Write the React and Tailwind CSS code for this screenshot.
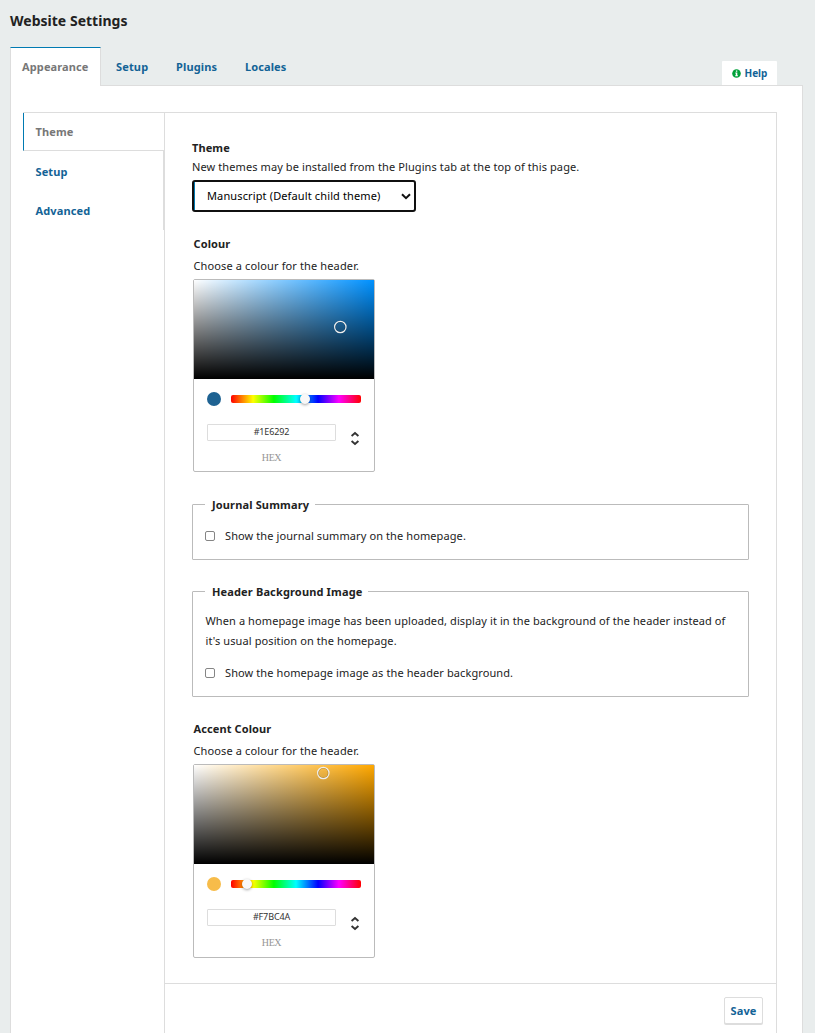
import React from "react";

const HUE = "bg-[linear-gradient(to_right,#f00_0%,#ff0_17%,#0f0_33%,#0ff_50%,#00f_67%,#f0f_83%,#f00_100%)]";

function ColourPicker({ hue, hex, pointer, handle, className }) {
  return (
    <div className={"flex w-[182px] flex-col rounded-[2px] border border-[#bbb] bg-white " + className}>
      <div className="relative h-[99px] overflow-hidden" style={{ backgroundColor: hue }}>
        <div className="absolute inset-0 bg-[linear-gradient(to_right,#fff,rgba(255,255,255,0))]" />
        <div className="absolute inset-0 bg-[linear-gradient(to_top,#000,rgba(0,0,0,0))]" />
        <svg className="absolute h-[14px] w-[14px]" style={{ left: pointer[0], top: pointer[1] }} viewBox="0 0 14 14">
          <circle cx="7.3" cy="7" r="5" fill="none" stroke="#000" strokeOpacity="0.25" strokeWidth="1" />
          <circle cx="7.3" cy="7" r="5.7" fill="none" stroke="#eee" strokeWidth="1.2" />
        </svg>
      </div>
      <div className="flex h-[39px] items-center pl-[13px]">
        <div className="h-[14px] w-[14px] rounded-full" style={{ backgroundColor: hex }} />
        <div className={"relative ml-[10px] h-2 w-[130px] rounded-[2px] " + HUE}>
          <div
            className="absolute -top-px h-[10px] w-[10px] rounded-full bg-[#f8f8f8] shadow-[0_1px_3px_rgba(0,0,0,0.37)]"
            style={{ left: handle }}
          />
        </div>
      </div>
      <div className="flex pl-[13px] pt-[6px]">
        <div className="w-[129px]">
          <div className="h-[17px] rounded-[1px] border border-[#ddd] text-center text-[9px] leading-[14px] tracking-[-0.12px] text-[#333]">
            {hex}
          </div>
          <div className="mt-[10px] text-center font-['Liberation_Serif',serif] text-[10px] leading-[14px] tracking-[-0.4px] text-[#969696]">
            HEX
          </div>
        </div>
        <svg className="ml-[14px] mt-[6px] h-[17px] w-[10px]" viewBox="0 0 10 17" fill="none" stroke="#333" strokeWidth="1.9">
          <path d="M1.6 6 5 3.1 8.4 6M1.6 11 5 13.9 8.4 11" />
        </svg>
      </div>
    </div>
  );
}

function Check({ children }) {
  return (
    <label className="flex h-5 items-center">
      <input type="checkbox" className="h-[10px] w-[10px] shrink-0 appearance-none rounded-[2px] border border-[#858585] bg-white" />
      <span className="ml-[10px]">{children}</span>
    </label>
  );
}

function Group({ title, children, className }) {
  return (
    <fieldset className={"w-[557px] rounded-[1px] border border-[#bbb] pl-3 " + className}>
      <legend className="h-[18px] pl-[7px] pr-[6px] font-bold leading-5 tracking-[0.15px]">{title}</legend>
      {children}
    </fieldset>
  );
}

export default function App() {
  return (
    <div className="flex h-[1033px] w-[815px] flex-col overflow-hidden bg-[#e9eded] font-['Noto_Sans',sans-serif] text-[11px] leading-5 text-[#222]">
      <h1 className="ml-[10px] mt-[9px] h-6 text-[14px] font-bold leading-6 tracking-[0.02px]">Website Settings</h1>
      <div className="ml-[10px] mt-[14px] flex h-[38px] w-[793px] font-bold text-[#136396]">
        <div className="z-10 h-[39px] w-[91px] border-x border-t border-x-[#ddd] border-t-[#007ab2] bg-white pl-[11px] pt-[9px] tracking-[0.12px] text-[#777]">
          Appearance
        </div>
        <div className="ml-[15px] w-[60px] pt-[10px] tracking-[0.15px]">Setup</div>
        <div className="w-[69px] pt-[10px] tracking-[0.15px]">Plugins</div>
        <div className="pt-[10px] tracking-[0.1px]">Locales</div>
        <div className="ml-auto mr-[26px] mt-[14px] flex h-6 w-[55px] items-center rounded-t-[1px] bg-white pl-[10px] text-[10px]">
          <svg className="h-[9px] w-[9px]" viewBox="0 0 9 9">
            <circle cx="4.5" cy="4.5" r="4.3" fill="#00a13a" />
            <path d="M3.9 1.4h1.4v1.3H3.9zM3.3 3.6h2v2.7h.6v.9H3.2v-.9h.6V4.5h-.5z" fill="#fff" />
          </svg>
          <span className="-mt-px ml-[3.5px]">Help</span>
        </div>
      </div>
      <div className="ml-[10px] w-[793px] flex-1 border-x border-t border-[#ddd] bg-white pl-3 pt-[26px]">
        <div className="flex h-full w-[754px] border-r border-t border-[#ddd]">
          <nav className="w-[141px] font-bold tracking-[0.12px] text-[#136396]">
            <div className="h-[38px] border-b border-l border-b-[#ddd] border-l-[#007ab2] pl-[11.5px] pt-[9px] text-[#777]">Theme</div>
            <div className="h-10 border-r border-[#ddd] pl-[12.5px] pt-[11px]">Setup</div>
            <div className="h-[39px] border-r border-[#ddd] pl-[12.5px] pt-[10px]">Advanced</div>
          </nav>
          <main className="flex flex-1 flex-col border-l border-[#ddd] tracking-[0.1px]">
            <div className="h-[871px] border-b border-[#ddd] pl-[27px] pt-[25px]">
              <div className="font-bold">Theme</div>
              <div className="-mt-px">New themes may be installed from the Plugins tab at the top of this page.</div>
              <div className="mt-[3px] flex h-8 w-[224px] items-center rounded-[3px] border-2 border-[#101010] bg-white">
                <div className="h-full w-px bg-[#007ab2]" />
                <span className="ml-3 flex-1 tracking-[0.13px] text-black">Manuscript (Default child theme)</span>
                <svg className="mr-[3px] h-[7px] w-[10px]" viewBox="0 0 10 7" fill="none" stroke="#111" strokeWidth="2">
                  <path d="M1 1.2 5 5.2 9 1.2" />
                </svg>
              </div>
              <div className="ml-px mt-[22px]">
                <div className="pl-[0.5px] font-bold">Colour</div>
                <div className="mb-[3px] mt-[2px] pl-[0.5px] tracking-[0.13px]">Choose a colour for the header.</div>
                <ColourPicker className="h-[193px]" hue="#0091ff" hex="#1E6292" pointer={[139, 40]} handle={69} />
              </div>
              <Group title="Journal Summary" className="mt-[23px] h-[65px]">
                <div className="mt-[13px]">
                  <Check>Show the journal summary on the homepage.</Check>
                </div>
              </Group>
              <Group title="Header Background Image" className="mt-[22px] h-[115px]">
                <p className="mt-[11px] w-[530px] pl-[0.5px]">
                  When a homepage image has been uploaded, display it in the background of the header instead of<br />
                  it's usual position on the homepage.
                </p>
                <div className="mt-3">
                  <Check>Show the homepage image as the header background.</Check>
                </div>
              </Group>
              <div className="ml-px mt-[22px]">
                <div className="pl-[0.5px] font-bold">Accent Colour</div>
                <div className="mb-[3px] mt-[2px] pl-[0.5px] tracking-[0.13px]">Choose a colour for the header.</div>
                <ColourPicker className="h-[194px]" hue="#ffa800" hex="#F7BC4A" pointer={[122, 1]} handle={10.5} />
              </div>
            </div>
            <div className="flex justify-end pr-[13px] pt-[13px]">
              <button className="h-[27px] w-[39px] rounded-[2px] border border-[#ddd] bg-white pt-px font-bold text-[#136396] shadow-[0_1px_0_#ddd]">Save</button>
            </div>
          </main>
        </div>
      </div>
    </div>
  );
}
